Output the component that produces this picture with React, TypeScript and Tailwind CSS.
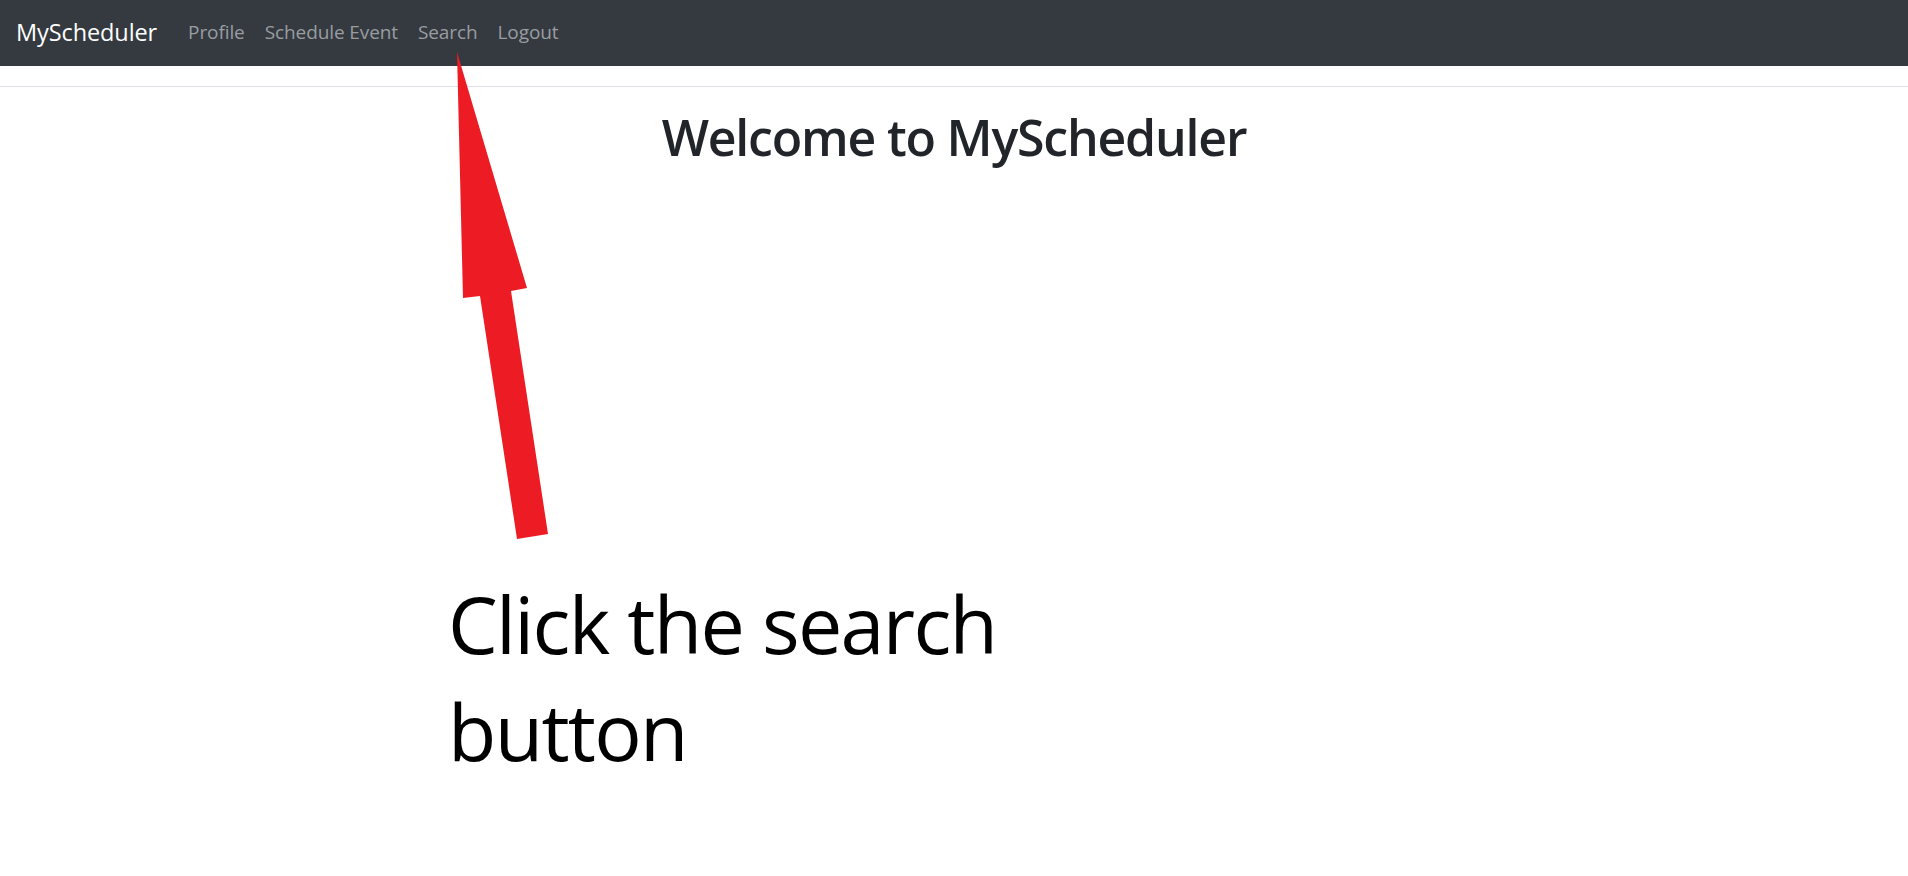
import React from 'react';

const links = ['Profile', 'Schedule Event', 'Search', 'Logout'];

const App = () => {
  return (
    <div className="relative min-h-[876px] bg-white font-['Open_Sans',sans-serif]">
      <nav className="flex h-[66px] items-center bg-[#343a40] px-4">
        <a className="mr-[21px] text-[23.5px] leading-none tracking-[-0.1px] text-white">MyScheduler</a>
        <ul className="flex items-center">
          {links.map((link) => (
            <li key={link}>
              <a className="px-[10px] text-[19px] leading-none tracking-[-0.1px] text-[#9a9da0]">{link}</a>
            </li>
          ))}
        </ul>
      </nav>

      <div className="mt-[20px] border-t border-[#dee2e6]"></div>

      <h1 className="mt-[20px] text-center text-[50px] font-semibold leading-[60px] tracking-[-1.2px] text-[#212529]">
        Welcome to MyScheduler
      </h1>

      {/* Annotation overlay */}
      <svg className="absolute left-0 top-0" width="600" height="560" viewBox="0 0 600 560">
        <polygon
          points="457,52 527,288 511,291 548,534 517,539 480,296 463,298"
          fill="#ed1c24"
        />
      </svg>

      <p className="absolute left-[448px] top-[570px] text-[79px] leading-[107px] tracking-[-1.7px] text-black">
        Click the search
        <br />
        button
      </p>
    </div>
  );
};

export default App;
